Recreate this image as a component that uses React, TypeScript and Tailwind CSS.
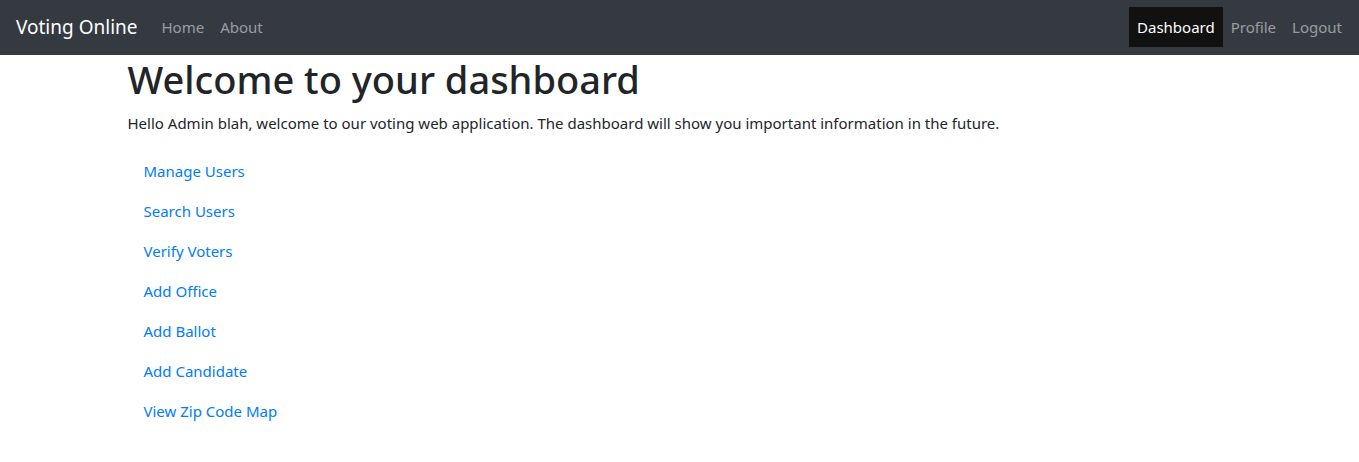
import React from "react";

const adminLinks = [
	"Manage Users",
	"Search Users",
	"Verify Voters",
	"Add Office",
	"Add Ballot",
	"Add Candidate",
	"View Zip Code Map",
];

export default function App() {
	return (
		<div className="min-h-screen bg-white text-[#212529] font-['Noto_Sans',_'Liberation_Sans',_sans-serif] text-[15px] leading-6">
			<nav className="h-[55px] bg-[#343a40] flex items-center justify-between pl-4 pr-[9px] pb-[2px]">
				<div className="flex items-center">
					<a href="#" className="text-white text-[19px] leading-[30px] mr-4">
						Voting Online
					</a>
					<div className="flex">
						<a href="#" className="px-2 py-2 text-white/50">
							Home
						</a>
						<a href="#" className="px-2 py-2 text-white/50">
							About
						</a>
					</div>
				</div>
				<div className="flex items-center">
					<a href="#" className="px-2 h-10 flex items-center bg-[#111111] text-white">
						Dashboard
					</a>
					<a href="#" className="px-2 py-2 text-white/50">
						Profile
					</a>
					<a href="#" className="px-2 py-2 text-white/50">
						Logout
					</a>
				</div>
			</nav>

			<main className="max-w-[1140px] mx-auto pl-[18px] pr-[15px]">
				<h1 className="text-[38px] leading-[48px] font-medium mb-2">
					Welcome to your dashboard
				</h1>
				<p className="mb-4">
					Hello Admin blah, welcome to our voting web application. The dashboard will
					show you important information in the future.
				</p>
				<div className="flex flex-col">
					{adminLinks.map(link => (
						<a key={link} href="#" className="px-4 py-2 text-[#007bff] self-start">
							{link}
						</a>
					))}
				</div>
			</main>
		</div>
	);
}
